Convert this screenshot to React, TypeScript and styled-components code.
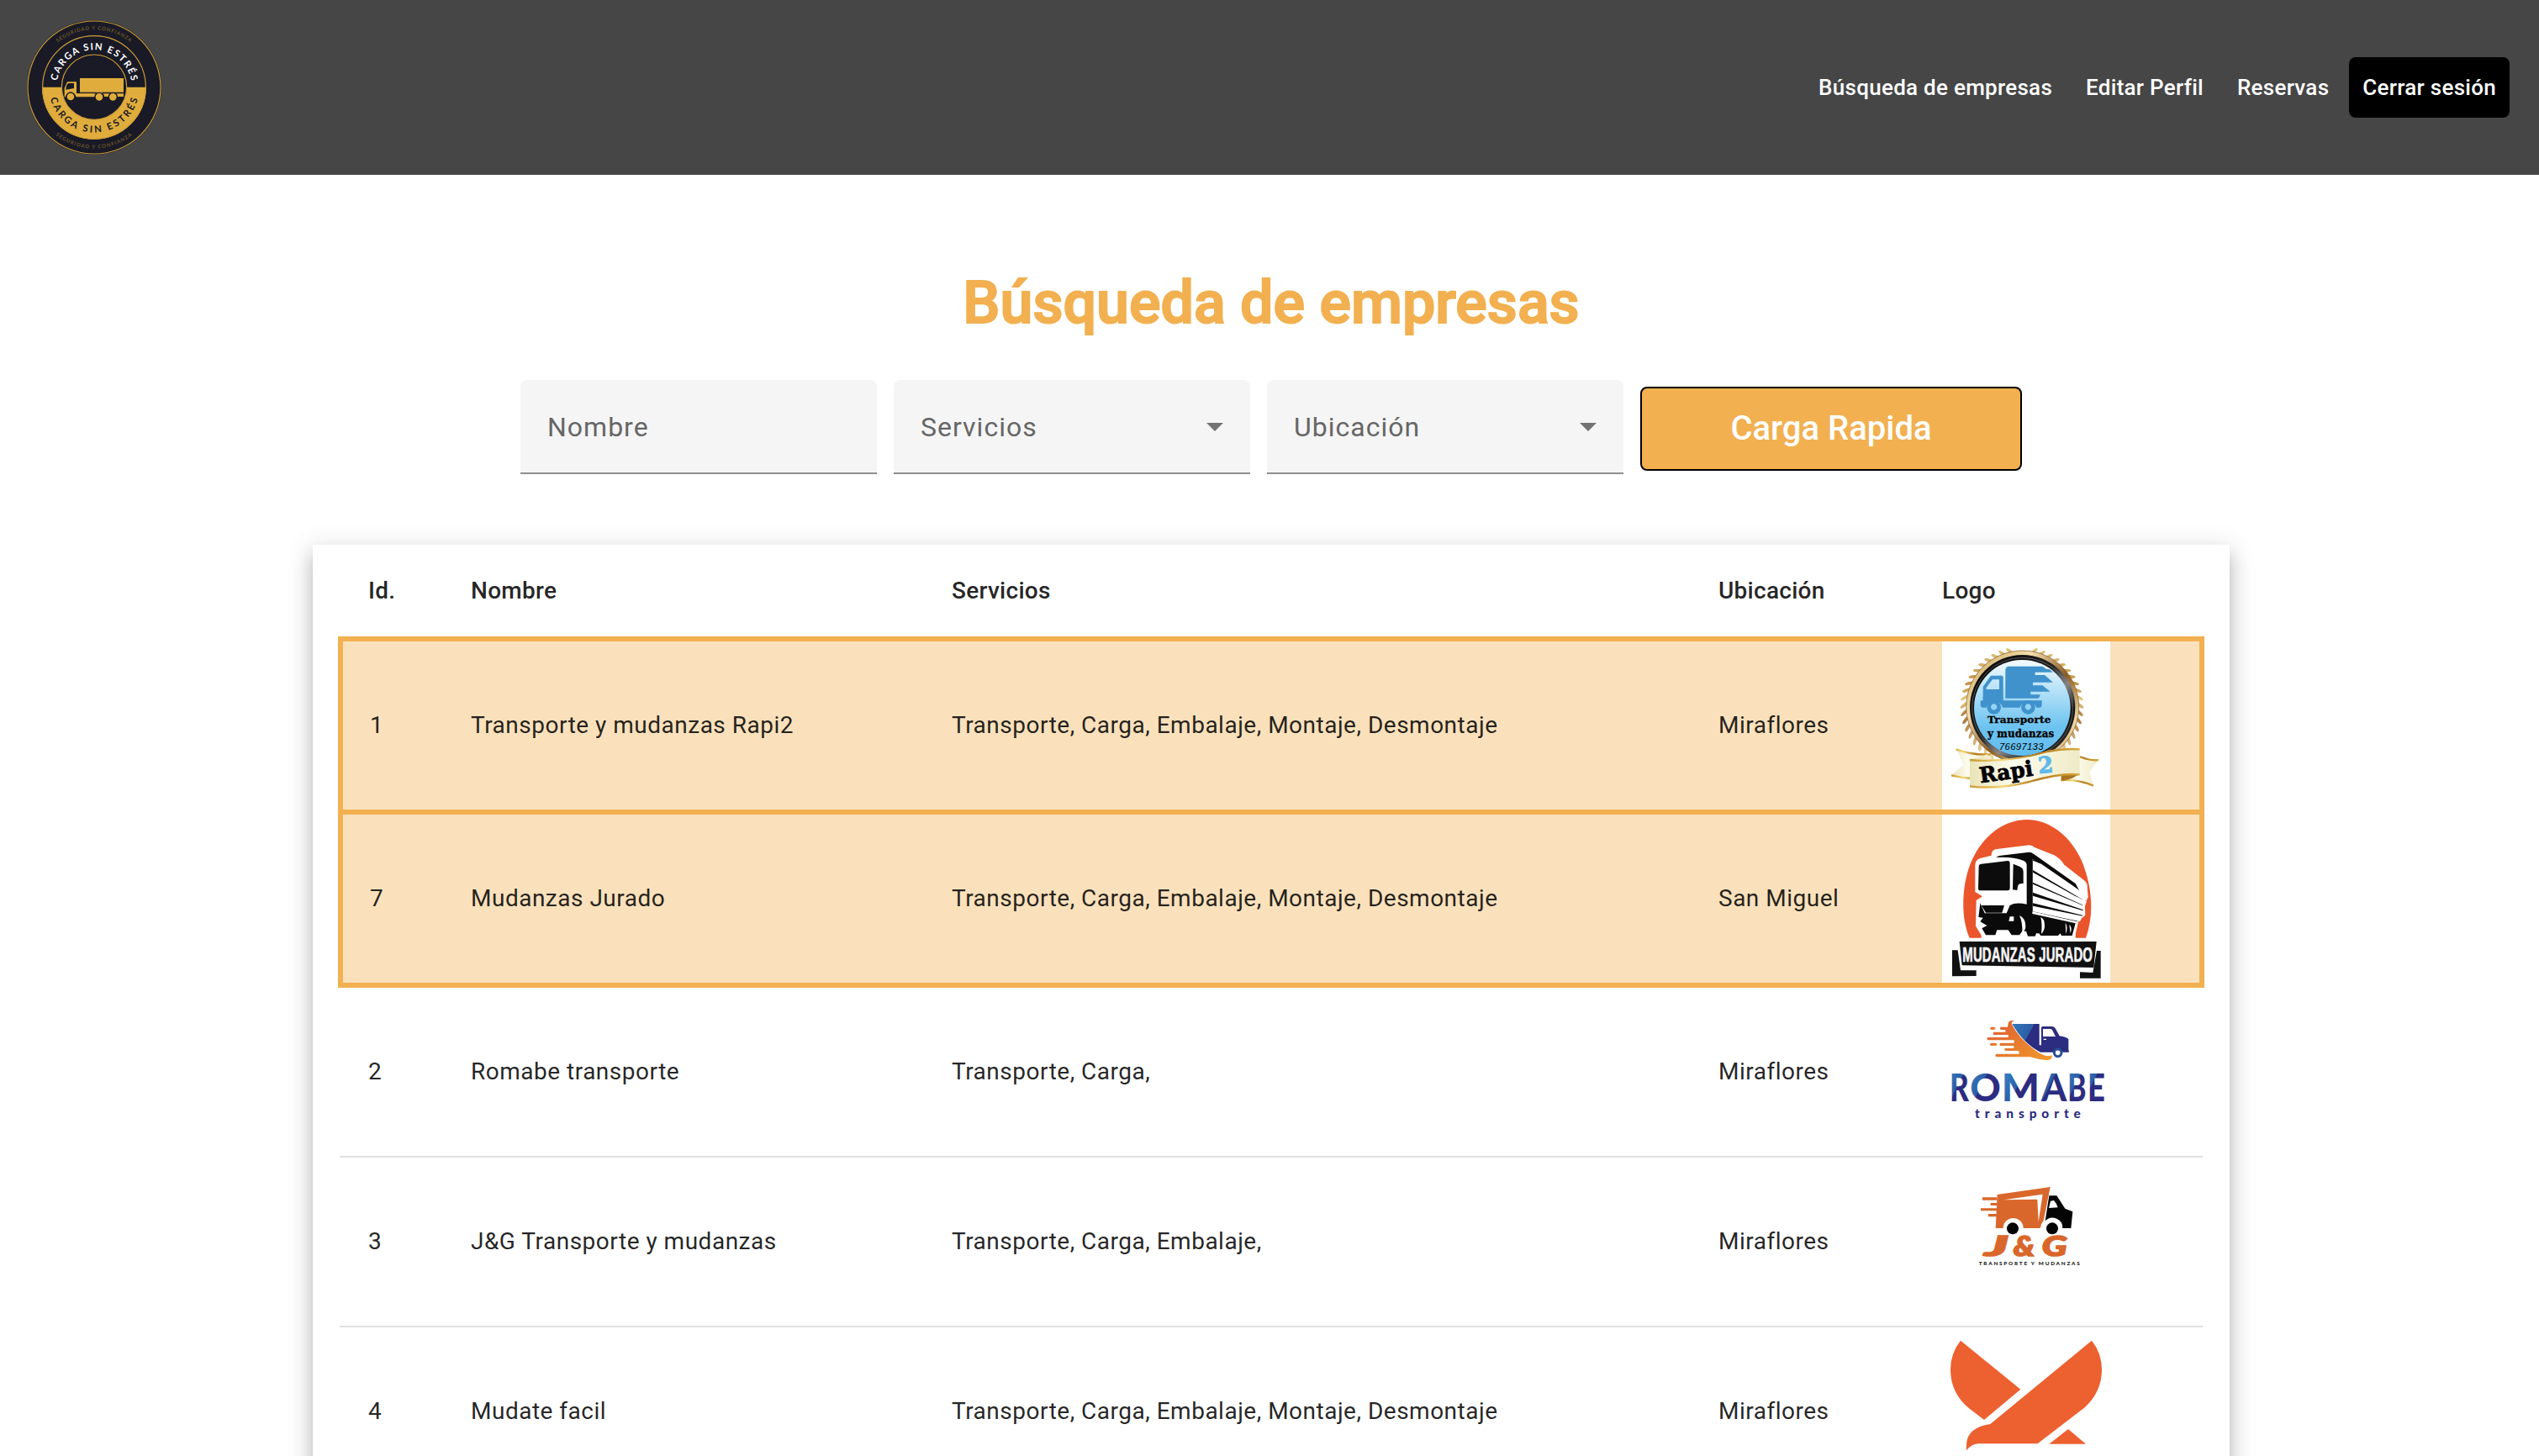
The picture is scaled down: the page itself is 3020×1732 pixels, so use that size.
import React from "react";
import styled, { createGlobalStyle } from "styled-components";

const GlobalStyle = createGlobalStyle`
  * { box-sizing: border-box; }
  html, body { margin: 0; padding: 0; background: #fff; }
  body {
    width: 3020px;
    height: 1732px;
    overflow: hidden;
    font-family: Roboto, "Liberation Sans", sans-serif;
    color: rgba(0, 0, 0, 0.87);
    -webkit-font-smoothing: antialiased;
  }
`;

const Page = styled.div`
  display: flex;
  flex-direction: column;
  width: 3020px;
  height: 1732px;
  overflow: hidden;
`;

const Toolbar = styled.header`
  display: flex;
  align-items: center;
  justify-content: space-between;
  flex: none;
  height: 208px;
  padding: 0 35px 0 32px;
  background: #464646;
`;

const BrandMark = styled.svg`
  display: block;
  width: 160px;
  height: 160px;
`;

const Nav = styled.nav`
  display: flex;
  align-items: center;
  gap: 8px;
`;

const NavLink = styled.a<{ $solid?: boolean }>`
  display: flex;
  align-items: center;
  height: 72px;
  padding: 0 16px;
  border-radius: 8px;
  background: ${(p) => (p.$solid ? "#000" : "transparent")};
  color: #fff;
  font-size: 26px;
  font-weight: 500;
  letter-spacing: 0.28px;
  white-space: nowrap;
`;

const Main = styled.main`
  display: flex;
  flex-direction: column;
  align-items: center;
  padding: 112px 0 0 4px;
`;

const Title = styled.h1`
  margin: 0;
  font-size: 70px;
  line-height: 80px;
  font-weight: 500;
  letter-spacing: 0;
  color: #f2b050;
  -webkit-text-stroke: 2px #f2b050;
  white-space: nowrap;
`;

const Filters = styled.form`
  display: flex;
  align-items: center;
  gap: 20px;
  margin-top: 52px;
  width: 1786px;
`;

const Field = styled.div`
  display: flex;
  align-items: center;
  justify-content: space-between;
  width: 424px;
  height: 112px;
  padding: 1px 32px 0;
  border-bottom: 2px solid #8e8e8e;
  border-radius: 8px 8px 0 0;
  background: #f5f5f5;
  color: #666;
  font-size: 32px;
  letter-spacing: 1px;
`;

const Caret = styled.span`
  width: 0;
  height: 0;
  border-left: 10px solid transparent;
  border-right: 10px solid transparent;
  border-top: 10px solid #737373;
`;

const QuickButton = styled.button`
  width: 454px;
  height: 100px;
  margin: 4px 0 0;
  padding: 0 0 2px;
  border: 2px solid #000;
  border-radius: 8px;
  background: #f2b050;
  color: #fff;
  font-family: inherit;
  font-size: 40px;
  font-weight: 500;
  letter-spacing: 0;
`;

const Card = styled.section`
  width: 2280px;
  height: 1300px;
  margin-top: 84px;
  padding: 0 32px;
  background: #fff;
  box-shadow: 0 10px 10px -6px rgba(0, 0, 0, 0.2), 0 16px 20px 2px rgba(0, 0, 0, 0.14),
    0 6px 28px 4px rgba(0, 0, 0, 0.12);
`;

const columns = "122px 572px 912px 266px 1fr";

const HeadRow = styled.div`
  display: grid;
  grid-template-columns: ${columns};
  align-items: center;
  height: 109px;
  padding-left: 34px;
  font-size: 28px;
  font-weight: 500;
  letter-spacing: 0.28px;
`;

const Row = styled.div<{ $featured?: boolean; $joined?: boolean }>`
  display: grid;
  grid-template-columns: ${columns};
  align-items: center;
  box-sizing: content-box;
  height: 200px;
  font-size: 28px;
  letter-spacing: 0.5px;
  margin: ${(p) => (p.$featured ? "0 -2px" : "0")};
  padding-left: ${(p) => (p.$featured ? "30px" : "34px")};
  background: ${(p) => (p.$featured ? "#fae1bc" : "#fff")};
  border: ${(p) => (p.$featured ? "6px solid #f2b050" : "0 solid #e0e0e0")};
  border-top-width: ${(p) => (p.$featured && !p.$joined ? "6px" : "0")};
  border-bottom-width: ${(p) => (p.$featured ? "6px" : "2px")};
`;

const Cell = styled.span<{ $shift?: boolean }>`
  padding-left: ${(p) => (p.$shift ? "2px" : "0")};
  padding-bottom: 2px;
  white-space: nowrap;
`;

const HeadCell = styled.span`
  white-space: nowrap;
`;

const Logo = styled.svg`
  display: block;
  width: 200px;
  height: 200px;
  background: #fff;
`;

const arc = (cx: number, cy: number, r: number, deg: number, below = false) => {
  const a = (deg * Math.PI) / 180;
  const s = below ? 1 : -1;
  const dx = r * Math.cos(a);
  const y = cy + s * r * Math.sin(a);
  return `M${cx - dx} ${y}A${r} ${r} 0 0 ${below ? 0 : 1} ${cx + dx} ${y}`;
};

const BrandLogo = () => (
  <BrandMark viewBox="96 72 480 480">
    <defs>
      <path id="ringTop" d={arc(336, 312, 134, 10)} />
      <path id="ringBottom" d={arc(336, 312, 161, 14, true)} />
      <path id="mottoTop" d={arc(336, 312, 206, 51)} />
      <path id="mottoBottom" d={arc(336, 312, 218, 51, true)} />
    </defs>
    <circle cx="336" cy="312" r="240" fill="#191a26" />
    <circle cx="336" cy="312" r="237" fill="none" stroke="#cf9f38" strokeWidth="3.5" />
    <path d="M150 311a186 186 0 0 0 372 0z" fill="#e0ad3c" />
    <circle cx="336" cy="312" r="184" fill="none" stroke="#cf9f38" strokeWidth="3.5" />
    <circle cx="336" cy="311" r="116" fill="#191a26" stroke="#cf9f38" strokeWidth="3.5" />
    <g fontFamily="Lato, sans-serif" fontWeight="700" fontSize="34">
      <text fill="#fff" textLength="374">
        <textPath href="#ringTop">CARGA SIN ESTRÉS</textPath>
      </text>
      <text fill="#191a26" textLength="424">
        <textPath href="#ringBottom">CARGA SIN ESTRÉS</textPath>
      </text>
    </g>
    <g fontFamily="Lato, sans-serif" fontWeight="700" fontSize="18" fill="#6d5729">
      <text textLength="278">
        <textPath href="#mottoTop">SEGURIDAD Y CONFIANZA</textPath>
      </text>
      <text textLength="294">
        <textPath href="#mottoBottom">SEGURIDAD Y CONFIANZA</textPath>
      </text>
    </g>
    <g fill="#e0ad3c">
      <path d="M285 279h156v50H285z" />
      <path d="M240 292h33v42h62l5 12h-68a20 20 0 0 0-38-2l-4 4v-34z" />
      <path d="M273 334h168v11h-22a17 17 0 0 0-32 0h-15a17 17 0 0 0-34 0H273z" />
      <circle cx="252" cy="345" r="15" stroke="#191a26" strokeWidth="4" />
      <circle cx="354" cy="346" r="15" stroke="#191a26" strokeWidth="4" />
      <circle cx="403" cy="346" r="15" stroke="#191a26" strokeWidth="4" />
    </g>
    <path d="M244 297h20v18l-29 5q0-16 9-23z" fill="#191a26" />
  </BrandMark>
);

const leaves = Array.from({ length: 19 }, (_, i) => 12 + i * 7.6);

const RapiLogo = () => (
  <Logo viewBox="60 39 600 600">
    <defs>
      <linearGradient id="sky" x1="0" y1="0" x2="0" y2="1">
        <stop offset="0" stopColor="#f4fbff" />
        <stop offset="0.7" stopColor="#6cc3f0" />
        <stop offset="1" stopColor="#62bdee" />
      </linearGradient>
      <linearGradient id="gold" x1="0" y1="0" x2="1" y2="1">
        <stop offset="0" stopColor="#c59a4a" />
        <stop offset="0.3" stopColor="#f3dfae" />
        <stop offset="0.55" stopColor="#8a5a24" />
        <stop offset="0.8" stopColor="#f0d9a4" />
        <stop offset="1" stopColor="#9c6b2c" />
      </linearGradient>
      <linearGradient id="steel" x1="0" y1="0" x2="1" y2="1">
        <stop offset="0" stopColor="#000" />
        <stop offset="0.45" stopColor="#222" />
        <stop offset="0.6" stopColor="#8a8a8a" />
        <stop offset="0.75" stopColor="#111" />
        <stop offset="1" stopColor="#444" />
      </linearGradient>
      <linearGradient id="leaf" x1="0" y1="60" x2="0" y2="440" gradientUnits="userSpaceOnUse">
        <stop offset="0" stopColor="#e2c478" />
        <stop offset="0.35" stopColor="#c0944a" />
        <stop offset="0.5" stopColor="#e7cd84" />
        <stop offset="0.65" stopColor="#a8743a" />
        <stop offset="1" stopColor="#ecd193" />
      </linearGradient>
      <linearGradient id="ribbon" x1="0" y1="0" x2="1" y2="0">
        <stop offset="0" stopColor="#e9e4b8" />
        <stop offset="0.4" stopColor="#fdfcee" />
        <stop offset="1" stopColor="#efeac6" />
      </linearGradient>
      <linearGradient id="trim" x1="0" y1="0" x2="1" y2="0">
        <stop offset="0" stopColor="#c8962c" />
        <stop offset="0.3" stopColor="#f4d878" />
        <stop offset="0.6" stopColor="#b37a1d" />
        <stop offset="1" stopColor="#d9a93f" />
      </linearGradient>
    </defs>
    <g fill="url(#leaf)">
      {leaves.map((d) => {
        const a = (d * Math.PI) / 180;
        const x = 207 * Math.sin(a);
        const y = 274 - 204 * Math.cos(a);
        return (
          <g key={d}>
            <ellipse cx={345 + x} cy={y} rx="16" ry="5.5" transform={`rotate(${d - 50} ${345 + x} ${y})`} />
            <ellipse cx={345 - x} cy={y} rx="16" ry="5.5" transform={`rotate(${50 - d} ${345 - x} ${y})`} />
          </g>
        );
      })}
    </g>
    <ellipse cx="347" cy="272" rx="201" ry="200" fill="url(#gold)" stroke="#7b5120" strokeWidth="2" />
    <ellipse cx="347" cy="275" rx="188" ry="188" fill="url(#steel)" />
    <ellipse cx="347" cy="275" rx="180" ry="178" fill="none" stroke="#777" strokeWidth="2" />
    <ellipse cx="346" cy="276" rx="172" ry="171" fill="url(#sky)" />
    <g fill="#3f92cc">
      <path d="M298 128h120l14 10h10l14 11h-64v10h34l30 26h-72v11h34l28 22h-70v11h34q0 8-8 13H286V140q2-12 12-12z" />
      <path d="M234 161h38q6 0 6 6v76h-72v-42zM240 175l-22 28v7h46v-35z" fillRule="evenodd" />
      <path d="M206 238h72v12h138v14q0 11-8 11h-12a30 30 0 0 0-58 0h-62a30 30 0 0 0-58 0h-14q-7 0-7-10v-14l9-2z" />
      <path fillRule="evenodd" d="M245 249a25 25 0 1 0 .1 0zM245 262a11 11 0 1 1-.1 0z" />
      <path fillRule="evenodd" d="M367 249a25 25 0 1 0 .1 0zM367 262a11 11 0 1 1-.1 0z" />
    </g>
    <g fontFamily="'DejaVu Serif', serif" fontWeight="700" fill="#000" stroke="#000" strokeWidth="1">
      <text x="222" y="329" fontSize="35" textLength="227" lengthAdjust="spacingAndGlyphs">Transporte</text>
      <text x="222" y="380" fontSize="36" textLength="238" lengthAdjust="spacingAndGlyphs">y mudanzas</text>
    </g>
    <text x="264" y="426" fontFamily="'Liberation Sans', sans-serif" fontStyle="italic" fontSize="34" textLength="158">
      76697133
    </text>
    <path d="M110 423q60 26 126 18v84q-84 10-143-8l44-38z" fill="url(#ribbon)" />
    <path d="M110 424q60 22 125 18M93 517q60 14 100 10" fill="none" stroke="url(#trim)" strokeWidth="7" />
    <path d="M485 525l66-70q40 10 67 6l-32 44 14 50q-60-22-115-18z" fill="url(#ribbon)" />
    <path d="M551 450q40 16 67 12M485 534q60-4 115 20" fill="none" stroke="url(#trim)" strokeWidth="7" />
    <path d="M485 514l66-2-28 16-38 10z" fill="#a87420" />
    <path d="M159 462l63-20 14 18q90 6 200-30 60-14 115-8v92q-70-6-180 26-110 28-212 16z" fill="url(#ribbon)" />
    <path d="M159 462q130 12 277-30 60-12 115-8M159 556q102 12 212-16 110-32 180-26" fill="none" stroke="url(#trim)" strokeWidth="7" />
    <g fontFamily="'DejaVu Serif', serif" fontWeight="700">
      <text x="197" y="544" fontSize="76" stroke="#000" strokeWidth="2.5" textLength="192" lengthAdjust="spacingAndGlyphs" transform="rotate(-8 197 544)">
        Rapi
      </text>
      <text x="405" y="510" fontSize="80" fill="#5db9ec" stroke="#5db9ec" strokeWidth="3" textLength="54" lengthAdjust="spacingAndGlyphs" transform="rotate(-5 405 510)">
        2
      </text>
    </g>
  </Logo>
);

const JuradoLogo = () => (
  <Logo viewBox="60 42 600 600">
    <path d="M158 482C126 410 130 300 160 220 200 120 280 60 362 60c90 0 170 70 205 170 32 90 32 180 6 252z" fill="#ea552b" />
    <path
      d="M178 222q0-18 18-24l40-10q0-18 14-22l120-15q12 0 20 8l70 28q20 10 36 34l74 58q10 10 8 22l3 36-12 14 2 50-24 20-14 61H206l-26-42 2-92 22-14-26-16z"
      fill="#fff"
    />
    <path d="M200 470h336v14H200z" fill="#fff" />
    <path d="M264 189l106-13q10 0 16 6l150 106 24 44-178-132v196l154 34-12 44h-38l-4-8-8 8h-62l-6-8h-10l-4 10h-26l-6-18h-14l-10 14h-28l-12-18h-40l-6 18h-34l-14-24 18-10-24-14 10-14-16-2 6-50 16 36h78l12-28q20-12 60-4V222q0-10-12-16-36-14-98-11z" fill="#0a0a0a" />
    <path d="M200 218l94-11q8 0 8 8v88q0 10-8 10h-98q-7 0-7-8l2-78q0-8 9-9z" fill="#0c0c0c" />
    <path d="M314 218l24 10q12 6 12 18v42q-18-2-20 10l-2 14-16-2z" fill="#0c0c0c" />
    <path d="M200 366h82l-8 26h-58z" fill="#0c0c0c" />
    <path d="M382 200L560 330l4 70-22 24-160-36z" fill="#0a0a0a" />
    <g fill="#fff">
      <path d="M384 206l30 12 110 76 56 40-4 16-24-10-168-100zM384 248l150 84 42 20-6 16-186-84zM384 290l186 80v14l-186-64zM384 332l184 54-4 16-180-44zM384 368l178 36-10 20-168-36z" />
      <path d="M336 402q22 10 22 38 0 16-12 24 2-36-10-62zM412 408q14 6 14 30 0 18-12 30 4-34-2-60zM500 428q10 14 2 40zM514 434q12 12 4 32zM302 406h14v16h-18z" />
    </g>
    <path d="M96 526h20l10 72h56v20l-86 1zM612 528h14v98h-74v-22l46 2z" fill="#111" />
    <path d="M122 495h489l-10 93-470-8z" fill="#111" />
    <g transform="translate(133 568) scale(0.73 1.36)">
      <text
        fontFamily="'Liberation Sans', sans-serif"
        fontWeight="700"
        fontSize="54"
        fill="#f4f4f6"
        stroke="#f4f4f6"
        strokeWidth="1.5"
        textLength="636"
        lengthAdjust="spacingAndGlyphs"
      >
        MUDANZAS JURADO
      </text>
    </g>
  </Logo>
);

const romabe: Array<[string, number, number, number]> = [
  ["R", 87, 69, 128],
  ["O", 160, 110, 212],
  ["M", 272, 136, 342],
  ["A", 413, 92, 456],
  ["B", 508, 67, 546],
  ["E", 579, 63, 604],
];

const RomabeLogo = () => (
  <Logo viewBox="60 -45 600 600">
    <defs>
      <linearGradient id="flame" x1="0" y1="0" x2="1" y2="1">
        <stop offset="0" stopColor="#dd5a33" />
        <stop offset="1" stopColor="#f09a2c" />
      </linearGradient>
      <linearGradient id="box" x1="310" y1="84" x2="420" y2="144" gradientUnits="userSpaceOnUse">
        <stop offset="0" stopColor="#3478bd" />
        <stop offset="0.55" stopColor="#2c5ea6" />
        <stop offset="0.56" stopColor="#2c2c80" />
      </linearGradient>
    </defs>
    <g fill="url(#flame)">
      <path d="M320 73q-20-4-24 8l-2 14h-26q-4 6 2 10h16v8h-42q-5 5 0 10h52v9h-72q-8 5 0 10h92q5 5 0 10h-48q-6 5 0 10h48v9h-32q-4 5 2 9h46q6 5 2 11h-80q-8 5 0 11h120q30 10 62 12 18-2 16-18-24 10-62-20-56-40-82-92 0-10 14-11z" />
      <rect x="232" y="95" width="18" height="10" rx="5" />
      <rect x="231" y="152" width="25" height="10" rx="5" />
    </g>
    <path d="M310 84h97v76h7V98q0-5 5-5h34q8 0 12 8l14 26q28 4 32 12v36l2 10h-22a20 20 0 0 0-34 0h-46q-60-30-101-101z" fill="url(#box)" />
    <path d="M420 102h26q5 0 7 4l12 23h-45zM422 137h10v4h-10z" fill="#fff" />
    <circle cx="473" cy="187" r="13" fill="#fff" stroke="#2b4a96" strokeWidth="9" />
    <g fontFamily="Lato, sans-serif" fontWeight="900" fontSize="139">
      {romabe.map(([letter, x, width, split]) => (
        <g key={letter}>
          <linearGradient id={`split${letter}`} gradientUnits="userSpaceOnUse" x1={split - 50} y1="280" x2={split + 50} y2="330">
            <stop offset="0" stopColor="#3478bd" />
            <stop offset="0.38" stopColor="#2c5ea6" />
            <stop offset="0.42" stopColor="#2c2c80" />
          </linearGradient>
          <text x={x} y="359" textLength={width} lengthAdjust="spacingAndGlyphs" fill={`url(#split${letter})`}>
            {letter}
          </text>
        </g>
      ))}
    </g>
    <text x="177" y="419" fontFamily="Lato, sans-serif" fontWeight="900" fontSize="46" fill="#2c2c80" textLength="378">
      transporte
    </text>
  </Logo>
);

const JgLogo = () => (
  <Logo viewBox="60 -39 600 600">
    <g fill="#d9672b">
      <path d="M204 103h52v10h-52zM233 123h24v9h-24zM198 142h58v9h-58zM225 162h31v10h-31z" />
      <path fillRule="evenodd" d="M257 93l189-27-24 120q-10 12-12 27h-60a36 36 0 0 0-72 0h-27zM280 112l139-20-15 98-4-80z" />
    </g>
    <path fillRule="evenodd" d="M442 97h27l30 46 27 11-6 59h-30a36 36 0 0 0-62-26zM447 116l-6 25 32-2q-4-14-14-25z" fill="#050505" />
    <circle cx="312" cy="214" r="21" fill="#050505" />
    <circle cx="453" cy="214" r="21" fill="#050505" />
    <g
      fontFamily="Lato, sans-serif"
      fontWeight="900"
      fontStyle="italic"
      fontSize="98"
      fill="#d9672b"
      stroke="#d9672b"
      strokeWidth="5"
    >
      <text x="212" y="311" textLength="84" lengthAdjust="spacingAndGlyphs">J</text>
      <text x="314" y="311" textLength="76" lengthAdjust="spacingAndGlyphs">&amp;</text>
      <text x="416" y="311" textLength="90" lengthAdjust="spacingAndGlyphs">G</text>
    </g>
    <text x="191" y="345" fontFamily="Lato, sans-serif" fontWeight="900" fontSize="19" fill="#111" textLength="361">
      TRANSPORTE Y MUDANZAS
    </text>
  </Logo>
);

const MudateLogo = () => (
  <Logo viewBox="60 567 600 600">
    <g fill="#ed6030">
      <path d="M126 614L340 788 210 897 160 859Q90 804 90 717 90 660 126 614z" />
      <path d="M594 614Q630 660 630 717 630 796 570 852L401 982H192Q166 982 147 1006V984Q150 924 232 912z" />
      <path d="M510 930l63 53H442z" />
    </g>
  </Logo>
);

const companies = [
  { id: 1, name: "Transporte y mudanzas Rapi2", services: "Transporte, Carga, Embalaje, Montaje, Desmontaje", place: "Miraflores", logo: <RapiLogo />, featured: true },
  { id: 7, name: "Mudanzas Jurado", services: "Transporte, Carga, Embalaje, Montaje, Desmontaje", place: "San Miguel", logo: <JuradoLogo />, featured: true },
  { id: 2, name: "Romabe transporte", services: "Transporte, Carga,", place: "Miraflores", logo: <RomabeLogo />, featured: false },
  { id: 3, name: "J&G Transporte y mudanzas", services: "Transporte, Carga, Embalaje,", place: "Miraflores", logo: <JgLogo />, featured: false },
  { id: 4, name: "Mudate facil", services: "Transporte, Carga, Embalaje, Montaje, Desmontaje", place: "Miraflores", logo: <MudateLogo />, featured: false },
];

export default function App() {
  return (
    <Page>
      <GlobalStyle />
      <Toolbar>
        <BrandLogo />
        <Nav>
          <NavLink>Búsqueda de empresas</NavLink>
          <NavLink>Editar Perfil</NavLink>
          <NavLink>Reservas</NavLink>
          <NavLink $solid>Cerrar sesión</NavLink>
        </Nav>
      </Toolbar>
      <Main>
        <Title>Búsqueda de empresas</Title>
        <Filters>
          <Field>Nombre</Field>
          <Field>
            Servicios
            <Caret />
          </Field>
          <Field>
            Ubicación
            <Caret />
          </Field>
          <QuickButton type="button">Carga Rapida</QuickButton>
        </Filters>
        <Card>
          <HeadRow>
            <HeadCell>Id.</HeadCell>
            <HeadCell>Nombre</HeadCell>
            <HeadCell>Servicios</HeadCell>
            <HeadCell>Ubicación</HeadCell>
            <HeadCell>Logo</HeadCell>
          </HeadRow>
          {companies.map((c, i) => (
            <Row key={c.id} $featured={c.featured} $joined={i > 0}>
              <Cell $shift={c.featured}>{c.id}</Cell>
              <Cell>{c.name}</Cell>
              <Cell>{c.services}</Cell>
              <Cell>{c.place}</Cell>
              {c.logo}
            </Row>
          ))}
        </Card>
      </Main>
    </Page>
  );
}
